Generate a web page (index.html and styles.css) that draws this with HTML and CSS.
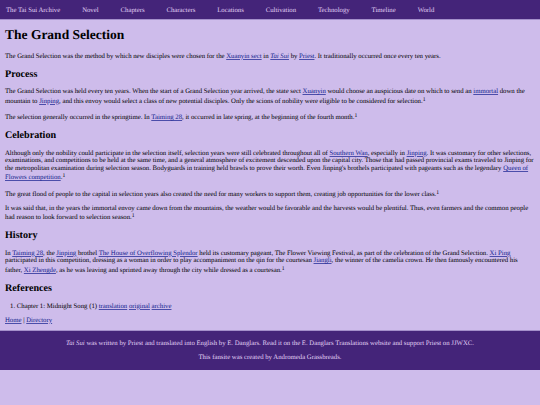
FILE: index.html
```html
<!DOCTYPE html>
<html lang="en">
<head>
  <meta charset="UTF-8" />
  <meta name="viewport" content="width=device-width, initial-scale=1.0"/>
  <title>The Grand Selection</title>
  <link rel="stylesheet" href="styles.css">
</head>
<body>
  <nav class="navbar">
    <a href="#">The Tai Sui Archive</a>
    <a href="#">Novel</a>
    <a href="#">Chapters</a>
    <a href="#">Characters</a>
    <a href="#">Locations</a>
    <a href="#">Cultivation</a>
    <a href="#">Technology</a>
    <a href="#">Timeline</a>
    <a href="#">World</a>
  </nav>

  <main class="content">
    <h1>The Grand Selection</h1>
    <p>The Grand Selection was the method by which new disciples were chosen for the <a href="#">Xuanyin sect</a> in <a href="#"><i>Tai Sui</i></a> by <a href="#">Priest</a>. It traditionally occurred once every ten years.</p>

    <h2>Process</h2>
    <p>The Grand Selection was held every ten years. When the start of a Grand Selection year arrived, the state sect <a href="#">Xuanyin</a> would choose an auspicious date on which to send an <a href="#">immortal</a> down the mountain to <a href="#">Jinping</a>, and this envoy would select a class of new potential disciples. Only the scions of nobility were eligible to be considered for selection.<sup>1</sup></p>
    <p>The selection generally occurred in the springtime. In <a href="#">Taiming 28</a>, it occurred in late spring, at the beginning of the fourth month.<sup>1</sup></p>

    <h2>Celebration</h2>
    <p>Although only the nobility could participate in the selection itself, selection years were still celebrated throughout all of <a href="#">Southern Wan</a>, especially in <a href="#">Jinping</a>. It was customary for other selections, examinations, and competitions to be held at the same time, and a general atmosphere of excitement descended upon the capital city. Those that had passed provincial exams traveled to Jinping for the metropolitan examination during selection season. Bodyguards in training held brawls to prove their worth. Even Jinping's brothels participated with pageants such as the legendary <a href="#">Queen of Flowers competition</a>.<sup>1</sup></p>
    <p>The great flood of people to the capital in selection years also created the need for many workers to support them, creating job opportunities for the lower class.<sup>1</sup></p>
    <p>It was said that, in the years the immortal envoy came down from the mountains, the weather would be favorable and the harvests would be plentiful. Thus, even farmers and the common people had reason to look forward to selection season.<sup>1</sup></p>

    <h2>History</h2>
    <p>In <a href="#">Taiming 28</a>, the <a href="#">Jinping</a> brothel <a href="#">The House of Overflowing Splendor</a> held its customary pageant, The Flower Viewing Festival, as part of the celebration of the Grand Selection. <a href="#">Xi Ping</a> participated in this competition, dressing as a woman in order to play accompaniment on the qin for the courtesan <a href="#">Jiangli</a>, the winner of the camelia crown. He then famously encountered his father, <a href="#">Xi Zhengde</a>, as he was leaving and sprinted away through the city while dressed as a courtesan.<sup>1</sup></p>

    <h2>References</h2>
    <ol>
      <li>Chapter 1: Midnight Song (1) <a href="#">translation</a> <a href="#">original</a> <a href="#">archive</a></li>
    </ol>
    <p><a href="#">Home</a> | <a href="#">Directory</a></p>
  </main>

  <footer class="footer">
    <p><i>Tai Sui</i> was written by Priest and translated into English by E. Danglars. Read it on the E. Danglars Translations website and support Priest on JJWXC.</p>
    <p>This fansite was created by Andromeda Grassbreads.</p>
  </footer>
</body>
</html>
```
FILE: styles.css
```css
html {
  font-size: 6.75px;
}

body {
  margin: 0;
  background-color: #cebceb;
  color: #000000;
  font-family: "Liberation Serif", "Times New Roman", serif;
  font-size: 1rem;
  line-height: 7.6px;
  text-rendering: geometricPrecision;
}

.navbar {
  display: flex;
  gap: 21.9px;
  padding: 6.5px 5.9px 4.9px;
  background-color: #442479;
  border-bottom: 1px solid #a48fcb;
}

.navbar a {
  color: #e0d0f5;
  text-decoration: none;
}

.content {
  padding: 7.5px 5px 5.9px;
}

h1 {
  margin: 0;
  font-size: 2rem;
  line-height: 15.6px;
}

h2 {
  margin: 8.35px 0;
  font-size: 1.5rem;
  line-height: 11.4px;
}

p {
  margin: 6.75px 0;
}

h1 + p {
  margin-top: 9.5px;
}

.content p:last-child {
  margin-bottom: 0;
}

a {
  color: #101c8c;
  text-decoration-thickness: 0.5px;
  text-decoration-color: #101c8cb0;
}

sup {
  font-size: 0.833em;
  line-height: 9px;
  vertical-align: 1.85px;
}

ol {
  margin: 6.75px 0;
  padding-left: 11.8px;
}

.footer {
  padding: 8.4px 5px;
  background-color: #442479;
  border-top: 1px solid #a48fcb;
  color: #e0d0f5;
  text-align: center;
}

.footer p {
  margin: 0 0 6.75px;
}

.footer p:last-child {
  margin-bottom: 0;
}
```
